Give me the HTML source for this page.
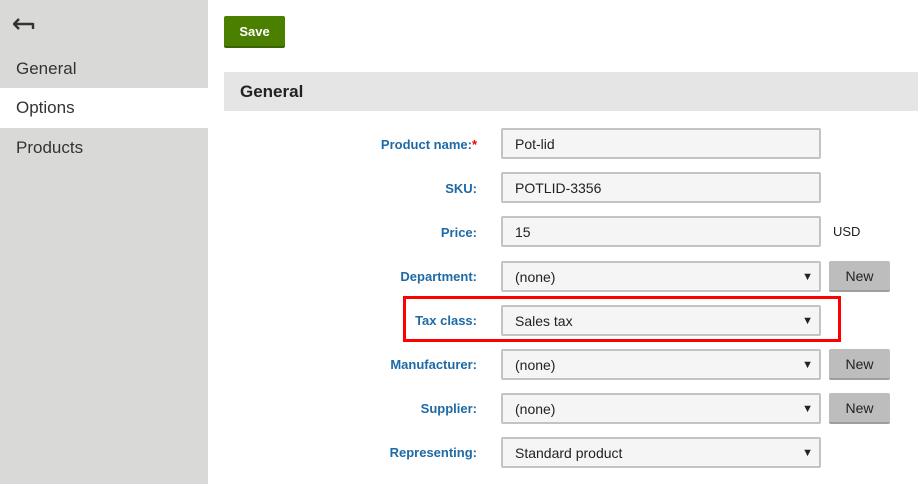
<!DOCTYPE html>
<html><head><style>
*{margin:0;padding:0;box-sizing:border-box}
body{width:918px;height:484px;background:#fff;font-family:"Liberation Sans",sans-serif;position:relative;overflow:hidden}
.side{position:absolute;left:0;top:0;width:208px;height:484px;background:#d9dad8}
.nav{position:absolute;left:0;width:208px;height:40px;padding-left:16px;font-size:17px;line-height:40px;color:#333}
.save{position:absolute;left:224px;top:16px;width:61px;height:32px;background:#4a7f00;border-bottom:2px solid #3b6500;border-radius:2px;color:#fff;font-weight:bold;font-size:13px;text-align:center;line-height:31px}
.hdr{position:absolute;left:224px;top:72px;width:694px;height:39px;background:#e5e5e5;font-weight:bold;font-size:17px;color:#222;padding-left:16px;line-height:40px}
.lbl{position:absolute;right:441px;font-size:13px;font-weight:bold;color:#1e6aa6;line-height:31px}
.inp{position:absolute;left:501px;width:320px;height:31px;border:2px solid #c3c3c3;border-radius:2px;background:#f5f5f5;font-size:14px;color:#222;padding-left:12px;line-height:28px}
.arr{position:absolute;right:6px;top:0;font-size:11px;color:#222}
.new{position:absolute;left:829px;width:61px;height:31px;background:#bdbdbd;border-bottom:2px solid #9e9e9e;border-radius:2px;font-size:14px;color:#222;text-align:center;line-height:30px}
.red{position:absolute;left:403px;top:296px;width:438px;height:46px;border:3px solid #f00}
</style></head><body>
<div class="side">
<svg style="position:absolute;left:13px;top:18px" width="22" height="12" viewBox="0 0 22 12"><path d="M6 1 L1 6 L6 11 M1 6 H20 M20 5 V11" stroke="#333" stroke-width="2.4" fill="none"/></svg>
<div class="nav" style="top:49px">General</div>
<div class="nav" style="top:88px;background:#fff">Options</div>
<div class="nav" style="top:128px">Products</div>
</div>
<div class="save">Save</div>
<div class="hdr">General</div>

<div class="lbl" style="top:129px">Product name:<span style="color:#e00">*</span></div>
<div class="inp" style="top:128px">Pot-lid</div>
<div class="lbl" style="top:173px">SKU:</div>
<div class="inp" style="top:172px">POTLID-3356</div>
<div class="lbl" style="top:217px">Price:</div>
<div class="inp" style="top:216px">15</div>
<div style="position:absolute;left:833px;top:217px;font-size:13px;line-height:30px;color:#222">USD</div>
<div class="lbl" style="top:261px">Department:</div>
<div class="inp" style="top:261px">(none)<span class="arr">▼</span></div>
<div class="new" style="top:261px">New</div>
<div class="lbl" style="top:305px">Tax class:</div>
<div class="inp" style="top:305px">Sales tax<span class="arr">▼</span></div>
<div class="red"></div>
<div class="lbl" style="top:349px">Manufacturer:</div>
<div class="inp" style="top:349px">(none)<span class="arr">▼</span></div>
<div class="new" style="top:349px">New</div>
<div class="lbl" style="top:393px">Supplier:</div>
<div class="inp" style="top:393px">(none)<span class="arr">▼</span></div>
<div class="new" style="top:393px">New</div>
<div class="lbl" style="top:437px">Representing:</div>
<div class="inp" style="top:437px">Standard product<span class="arr">▼</span></div>
</body></html>
